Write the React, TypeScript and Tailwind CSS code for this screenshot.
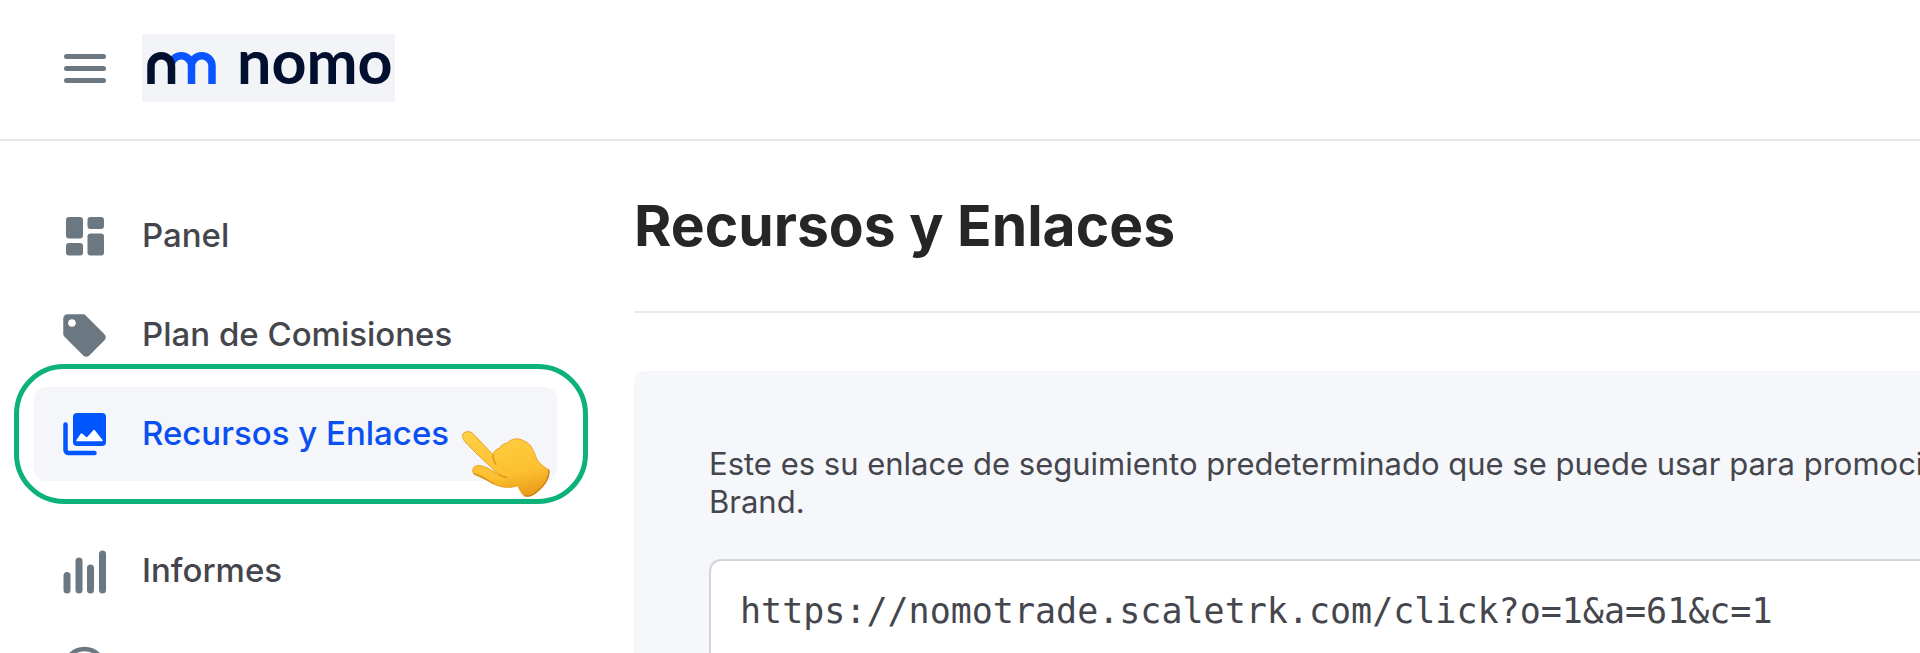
import { ReactNode } from "react";

const iconClass = "size-[51px] shrink-0";

function DashboardIcon() {
  return (
    <svg viewBox="0 0 51 51" className={iconClass} fill="currentColor">
      <rect x="7" y="6" width="17" height="21.5" rx="3" />
      <rect x="7" y="32" width="17" height="12.5" rx="3" />
      <rect x="28.5" y="6" width="16.5" height="12" rx="3" />
      <rect x="28.5" y="22.5" width="16.5" height="22" rx="3" />
    </svg>
  );
}

function TagIcon() {
  return (
    <svg viewBox="0 0 24 24" className={iconClass} fill="currentColor">
      <path d="M21.41 11.41l-8.83-8.83c-.37-.37-.88-.58-1.41-.58H4c-1.1 0-2 .9-2 2v7.17c0 .53.21 1.04.59 1.41l8.83 8.83c.78.78 2.05.78 2.83 0l7.17-7.17c.78-.78.78-2.04-.01-2.83zM6.1 7.9a1.8 1.8 0 1 1 0-3.6 1.8 1.8 0 0 1 0 3.6z" />
    </svg>
  );
}

function ImagesIcon() {
  return (
    <svg viewBox="0 0 51 51" className={iconClass}>
      <rect x="14" y="4" width="33" height="33" rx="4" fill="currentColor" />
      <path
        d="M6.5 15.5V41a3 3 0 0 0 3 3H35.5"
        fill="none"
        stroke="currentColor"
        strokeWidth="4.5"
        strokeLinecap="round"
      />
      <path
        d="M18 31.5l4.5-6.5 5.5 4.5 7-8 8 10z"
        fill="#fff"
        stroke="#fff"
        strokeWidth="1.5"
        strokeLinejoin="round"
      />
    </svg>
  );
}

function BarsIcon() {
  return (
    <svg viewBox="0 0 51 51" className={iconClass} fill="currentColor">
      <rect x="4.5" y="26" width="7" height="21.5" rx="3.5" />
      <rect x="16.5" y="11.5" width="7" height="36" rx="3.5" />
      <rect x="28" y="18.5" width="7" height="29" rx="3.5" />
      <rect x="40" y="4.5" width="7" height="43" rx="3.5" />
    </svg>
  );
}

function CircleIcon() {
  return (
    <svg viewBox="0 0 51 51" className={iconClass} fill="none">
      <circle cx="25.5" cy="24" r="20" stroke="currentColor" strokeWidth="4.5" />
    </svg>
  );
}

function PointingHand() {
  return (
    <svg
      viewBox="92 224 270 204"
      className="absolute left-[461px] top-[43px] w-[90px] h-[68px]"
    >
      <defs>
        <linearGradient id="skin" x1="0.2" y1="0" x2="0.5" y2="1">
          <stop offset="0" stopColor="#ffcf45" />
          <stop offset="0.7" stopColor="#fcc030" />
          <stop offset="1" stopColor="#eda01c" />
        </linearGradient>
      </defs>
      <path
        d="M98 236C104 227 119 226 129 236L188 298C191 287 198 281 208 279C212 269 220 265 231 263C243 250 262 246 279 256C304 264 311 290 318 308C324 322 340 335 355 343C360 366 342 392 323 407C310 419 292 425 283 422C274 417 268 403 262 391C236 401 205 396 181 381C166 371 142 363 130 355C122 341 132 328 149 331C169 333 183 345 207 358C173 327 132 290 104 259C96 250 95 243 98 236Z"
        fill="url(#skin)"
        stroke="#e8a427"
        strokeWidth="3"
      />
      <path
        d="M188 299C188 308 190 318 197 327M207 358C213 362 221 365 229 366M132 356C160 363 177 379 190 385"
        fill="none"
        stroke="#dc9320"
        strokeWidth="4"
        strokeLinecap="round"
      />
      <path
        d="M355 344C359 366 342 391 323 406C310 418 294 424 284 421"
        fill="none"
        stroke="#cd7f18"
        strokeWidth="4"
        strokeLinecap="round"
      />
    </svg>
  );
}

function Logo() {
  return (
    <a
      href="#"
      aria-label="nomo"
      className="flex items-center h-[68px] w-[253px] pl-[5px] bg-[#f3f4f8]"
    >
      <svg viewBox="0 0 70 32" className="w-[70px] h-8 shrink-0" fill="none" strokeWidth="7.5">
        <path
          d="M24 14a10 10 0 0 1 20.5 0V32M44.5 14a10 10 0 0 1 20.5 0V32"
          stroke="#0a55ff"
        />
        <path d="M4 32V14a10 10 0 0 1 20.5 0V32" stroke="#030f2e" />
      </svg>
      <span className="ml-5 font-[Lato] font-bold text-[61px] leading-[48px] h-[62px] text-[#030f2e]">
        nomo
      </span>
    </a>
  );
}

function NavItem({
  icon,
  label,
  active,
}: {
  icon: ReactNode;
  label: string;
  active?: boolean;
}) {
  return (
    <a
      href="#"
      className={`flex items-center gap-8 h-[94px] pl-[25px] rounded-xl text-[33px] font-medium whitespace-nowrap ${
        active ? "bg-[#f5f6fa] text-[#0a50f0]" : "text-[#45464d]"
      }`}
    >
      <span className={active ? "text-[#0055ff]" : "text-[#6b7881]"}>{icon}</span>
      {label}
    </a>
  );
}

export default function App() {
  return (
    <div className="h-screen overflow-hidden bg-white font-[Inter,sans-serif] text-[#45464d]">
      <header className="flex items-center h-[141px] pl-16 pb-[3px] gap-9 border-b-2 border-[#e8e8ea]">
        <button aria-label="Menu" className="flex flex-col gap-[7px] w-[42px]">
          <span className="h-[5px] w-full rounded-full bg-[#6b7881]" />
          <span className="h-[5px] w-full rounded-full bg-[#6b7881]" />
          <span className="h-[5px] w-full rounded-full bg-[#6b7881]" />
        </button>
        <Logo />
      </header>

      <div className="flex">
        <aside className="w-[634px] shrink-0 pt-12">
          <nav className="flex flex-col gap-[5px] pl-[34px] pr-[77px]">
            <NavItem icon={<DashboardIcon />} label="Panel" />
            <NavItem icon={<TagIcon />} label="Plan de Comisiones" />
            <div className="relative -ml-[34px] pl-[34px]">
              <NavItem icon={<ImagesIcon />} label="Recursos y Enlaces" active />
              <div className="absolute left-[14px] -right-[31px] -top-[23px] -bottom-[23px] border-5 border-[#0db17a] rounded-[50px] pointer-events-none" />
              <PointingHand />
            </div>
            <div className="flex flex-col gap-[5px] pt-[38px]">
              <NavItem icon={<BarsIcon />} label="Informes" />
              <NavItem icon={<CircleIcon />} label="" />
            </div>
          </nav>
        </aside>

        <main className="flex-1 min-w-0">
          <h1 className="pt-[49px] pb-[49px] text-[57px] leading-[72px] font-bold text-[#262626] border-b-2 border-[#ebebed]">
            Recursos y Enlaces
          </h1>
          <section className="mt-[58px] pt-[74px] pl-[75px] pb-20 rounded-tl-xl bg-[#f5f7fb] overflow-hidden">
            <label
              htmlFor="link"
              className="block text-[31px] leading-[38px] whitespace-nowrap"
            >
              Este es su enlace de seguimiento predeterminado que se puede usar para promocio
              <br />
              Brand.
            </label>
            <input
              id="link"
              readOnly
              value="https://nomotrade.scaletrk.com/click?o=1&a=61&c=1"
              className="block mt-[38px] w-[calc(100%+20px)] h-[104px] px-[29px] rounded-xl border-2 border-[#d3d4d9] bg-white font-['DejaVu_Sans_Mono',monospace] text-[35px] outline-none"
            />
          </section>
        </main>
      </div>
    </div>
  );
}
